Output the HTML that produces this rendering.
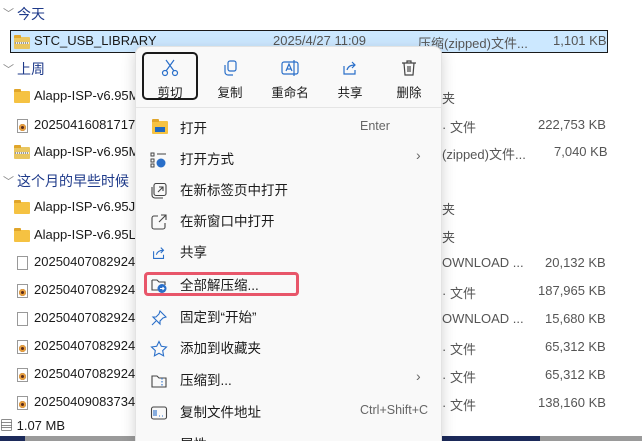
<!DOCTYPE html>
<html><head><meta charset="utf-8"><style>
*{margin:0;padding:0;box-sizing:border-box}
html,body{width:642px;height:441px;overflow:hidden}
body{background:#fff;font-family:"Liberation Sans","Noto Sans CJK SC",sans-serif;font-size:13px;color:#1a1a1a;position:relative}
.a{position:absolute;white-space:nowrap}
.hd{color:#1e3a8a;font-size:14px}
.chev{color:#888;font-size:11px}
.fold{position:absolute;width:16px;height:12px;background:#f5c242;border-radius:1px}
.fold:before{content:"";position:absolute;left:0;top:-2px;width:7px;height:3px;background:#e0a52a;border-radius:1px 1px 0 0}
.zip{background:#e9c660}
.zip:after{content:"";position:absolute;left:1px;right:1px;top:5px;height:2px;background:repeating-linear-gradient(90deg,#999 0 1px,#eee 1px 2px)}
.doc{position:absolute;width:11px;height:14px;border:1px solid #999;background:#fff}
.vid:after{content:"";position:absolute;left:1px;top:4px;width:7px;height:7px;border-radius:50%;background:#5a2a1a;box-shadow:inset 0 0 0 2px #e7a040}
.gr{color:#555}
.menu{position:absolute;left:135px;top:46px;width:307px;height:395px;background:#f9f9f9;border:1px solid #e3e3e3;border-bottom:none;border-radius:8px 8px 0 0;box-shadow:0 4px 14px rgba(0,0,0,.18)}
.mi{position:absolute;left:44px;font-size:13.5px;color:#1a1a1a}
.ic{position:absolute;left:14px}
.tb{position:absolute;top:35px;font-size:12.5px;text-align:center;width:50px}
</style></head><body>
<div class="a chev" style="left:3px;top:5px">﹀</div><div class="a hd" style="left:17px;top:4px">今天</div>
<div class="a" style="left:10px;top:30px;width:598px;height:23px;background:#cce8ff;border:1px solid #1a1a1a"></div>
<div class="fold zip" style="left:14px;top:37px"></div>
<div class="a" style="left:34px;top:33px">STC_USB_LIBRARY</div>
<div class="a gr" style="left:273px;top:33px">2025/4/27 11:09</div>
<div class="a gr" style="left:418px;top:33px">压缩(zipped)文件...</div>
<div class="a gr" style="left:553px;top:33px">1,101 KB</div>

<div class="a chev" style="left:3px;top:61px">﹀</div><div class="a hd" style="left:17px;top:59px">上周</div>
<div class="fold" style="left:14px;top:91px"></div><div class="a" style="left:34px;top:88px">Alapp-ISP-v6.95M</div>
<div class="doc vid" style="left:17px;top:119px"></div><div class="a" style="left:34px;top:117px">20250416081717-</div>
<div class="fold zip" style="left:14px;top:147px"></div><div class="a" style="left:34px;top:144px">Alapp-ISP-v6.95M</div>
<div class="a chev" style="left:3px;top:173px">﹀</div><div class="a hd" style="left:17px;top:171px">这个月的早些时候</div>
<div class="fold" style="left:14px;top:202px"></div><div class="a" style="left:34px;top:199px">Alapp-ISP-v6.95J</div>
<div class="fold" style="left:14px;top:230px"></div><div class="a" style="left:34px;top:227px">Alapp-ISP-v6.95L</div>
<div class="doc" style="left:17px;top:256px"></div><div class="a" style="left:34px;top:254px">20250407082924-</div>
<div class="doc vid" style="left:17px;top:284px"></div><div class="a" style="left:34px;top:282px">20250407082924-</div>
<div class="doc" style="left:17px;top:312px"></div><div class="a" style="left:34px;top:310px">20250407082924-</div>
<div class="doc vid" style="left:17px;top:340px"></div><div class="a" style="left:34px;top:338px">20250407082924-</div>
<div class="doc vid" style="left:17px;top:368px"></div><div class="a" style="left:34px;top:366px">20250407082924-</div>
<div class="doc vid" style="left:17px;top:396px"></div><div class="a" style="left:34px;top:394px">20250409083734-</div>
<div class="a" style="left:0;top:415px">▤ 1.07 MB</div>

<div class="a gr" style="left:442px;top:88px">夹</div>
<div class="a gr" style="left:442px;top:117px">· 文件</div><div class="a gr" style="left:538px;top:117px">222,753 KB</div>
<div class="a gr" style="left:442px;top:144px">(zipped)文件...</div><div class="a gr" style="left:554px;top:144px">7,040 KB</div>
<div class="a gr" style="left:442px;top:199px">夹</div>
<div class="a gr" style="left:442px;top:227px">夹</div>
<div class="a gr" style="left:442px;top:255px">OWNLOAD ...</div><div class="a gr" style="left:545px;top:255px">20,132 KB</div>
<div class="a gr" style="left:442px;top:283px">· 文件</div><div class="a gr" style="left:538px;top:283px">187,965 KB</div>
<div class="a gr" style="left:442px;top:311px">OWNLOAD ...</div><div class="a gr" style="left:545px;top:311px">15,680 KB</div>
<div class="a gr" style="left:442px;top:339px">· 文件</div><div class="a gr" style="left:545px;top:339px">65,312 KB</div>
<div class="a gr" style="left:442px;top:367px">· 文件</div><div class="a gr" style="left:545px;top:367px">65,312 KB</div>
<div class="a gr" style="left:442px;top:395px">· 文件</div><div class="a gr" style="left:538px;top:395px">138,160 KB</div>

<div class="a" style="left:0;top:436px;width:642px;height:5px;background:#9a9a9a"></div>
<div class="a" style="left:0;top:436px;width:25px;height:5px;background:#1c2a5a"></div>
<div class="a" style="left:442px;top:436px;width:98px;height:5px;background:#1c2a5a"></div>

<div class="menu">
 <div class="a" style="left:6px;top:5px;width:56px;height:48px;border:2px solid #1a1a1a;border-radius:5px"></div>
 <svg class="a" style="left:24px;top:11px" width="20" height="20" viewBox="0 0 20 20" fill="none" stroke="#2a6fc9" stroke-width="1.2"><path d="M6 2l8 11M14 2l-8 11"/><circle cx="5" cy="15" r="2.5"/><circle cx="15" cy="15" r="2.5"/></svg>
 <svg class="a" style="left:84px;top:11px" width="20" height="20" viewBox="0 0 20 20" fill="none" stroke="#2a6fc9" stroke-width="1.2"><rect x="8" y="3" width="8" height="10" rx="2"/><path d="M5 7v7a3 3 0 003 3h5"/></svg>
 <svg class="a" style="left:144px;top:11px" width="20" height="20" viewBox="0 0 20 20" fill="none" stroke="#2a6fc9" stroke-width="1.2"><rect x="2" y="4" width="16" height="12" rx="2"/><path d="M6 13l3-7 3 7M7 11h4M14 2v16"/></svg>
 <svg class="a" style="left:204px;top:11px" width="20" height="20" viewBox="0 0 20 20" fill="none" stroke="#2a6fc9" stroke-width="1.2"><path d="M4 8v8h11v-4"/><path d="M7 12c1-4 4-5 8-5M12 4l3 3-3 3"/></svg>
 <svg class="a" style="left:263px;top:11px" width="20" height="20" viewBox="0 0 20 20" fill="none" stroke="#444" stroke-width="1.2"><path d="M3 5h14M8 5V3h4v2M5 5l1 12h8l1-12M9 8v6M11 8v6"/></svg>
 <div class="tb" style="left:9px">剪切</div><div class="tb" style="left:69px">复制</div><div class="tb" style="left:129px">重命名</div><div class="tb" style="left:189px">共享</div><div class="tb" style="left:248px">删除</div>
 <div class="a" style="left:0;top:60px;width:305px;height:1px;background:#e5e5e5"></div>

 <div class="fold" style="left:16px;top:74px;height:13px;background:#f5c242"><div style="position:absolute;left:3px;top:6px;width:10px;height:5px;background:#1e68c0"></div></div>
 <div class="mi" style="top:70px">打开</div><div class="a" style="left:224px;top:72px;color:#666;font-size:12.5px">Enter</div>
 <svg class="ic a" style="top:104px" width="18" height="18" viewBox="0 0 18 18"><g fill="none" stroke="#444"><rect x="1" y="2" width="3" height="3"/><rect x="1" y="8" width="3" height="3"/><rect x="1" y="13" width="3" height="3"/><path d="M7 3h9"/></g><circle cx="11" cy="12" r="4.5" fill="#2a6fc9"/></svg>
 <div class="mi" style="top:101px">打开方式</div><div class="a" style="left:280px;top:100px;color:#666;font-size:14px">›</div>
 <svg class="ic a" style="top:135px" width="18" height="18" viewBox="0 0 18 18" fill="none" stroke="#444" stroke-width="1.1"><rect x="4" y="1.5" width="12" height="12" rx="2"/><path d="M2 5v8a3 3 0 003 3h8M8 10l5-5M9 5h4v4"/></svg>
 <div class="mi" style="top:132px">在新标签页中打开</div>
 <svg class="ic a" style="top:166px" width="18" height="18" viewBox="0 0 18 18" fill="none" stroke="#444" stroke-width="1.1"><path d="M8 3H4a2 2 0 00-2 2v9a2 2 0 002 2h9a2 2 0 002-2v-4M9 9l7-7M11 2h5v5"/></svg>
 <div class="mi" style="top:163px">在新窗口中打开</div>
 <svg class="ic a" style="top:197px" width="18" height="18" viewBox="0 0 20 20" fill="none" stroke="#2a6fc9" stroke-width="1.2"><path d="M4 8v8h11v-4"/><path d="M7 12c1-4 4-5 8-5M12 4l3 3-3 3"/></svg>
 <div class="mi" style="top:194px">共享</div>
 <div class="a" style="left:8px;top:225px;width:155px;height:24px;border:3px solid #e8566a;border-radius:4px"></div>
 <svg class="ic a" style="top:229px" width="18" height="18" viewBox="0 0 18 18"><path d="M2 4h5l2 2h6v3M2 4v10h6" fill="none" stroke="#444" stroke-width="1.1"/><circle cx="12" cy="12.5" r="4.5" fill="#2a6fc9"/><path d="M10 12.5h4M12.5 11l1.5 1.5-1.5 1.5" stroke="#fff" fill="none"/></svg>
 <div class="mi" style="top:227px">全部解压缩...</div>
 <svg class="ic a" style="top:262px" width="18" height="18" viewBox="0 0 18 18" fill="none" stroke="#2a6fc9" stroke-width="1.1"><path d="M10 2l6 6-3 1-3 3v3l-7-7h3l3-3zM6 12l-4 4"/></svg>
 <div class="mi" style="top:259px">固定到“开始”</div>
 <svg class="ic a" style="top:293px" width="18" height="18" viewBox="0 0 18 18" fill="none" stroke="#2a6fc9" stroke-width="1.1"><path d="M9 1.5l2.3 4.8 5.2.7-3.8 3.6.9 5.2L9 13.3l-4.6 2.5.9-5.2L1.5 7l5.2-.7z"/></svg>
 <div class="mi" style="top:290px">添加到收藏夹</div>
 <svg class="ic a" style="top:325px" width="18" height="18" viewBox="0 0 18 18" fill="none" stroke="#444" stroke-width="1.1"><path d="M2 4h5l2 2h7v9H2z"/><path d="M12 6v9" stroke="#2a6fc9" stroke-dasharray="1.5 1.5"/></svg>
 <div class="mi" style="top:322px">压缩到...</div><div class="a" style="left:280px;top:321px;color:#666;font-size:14px">›</div>
 <svg class="ic a" style="top:357px" width="18" height="18" viewBox="0 0 18 18" fill="none" stroke="#444" stroke-width="1.1"><rect x="1.5" y="3" width="15" height="12" rx="2"/><path d="M4 6v6M6 6v6M9 12h1M12 12h1" stroke="#2a6fc9"/></svg>
 <div class="mi" style="top:354px">复制文件地址</div><div class="a" style="left:224px;top:356px;color:#666;font-size:12.5px">Ctrl+Shift+C</div>
 <div class="mi" style="top:386px">属性</div>
</div>
</body></html>
